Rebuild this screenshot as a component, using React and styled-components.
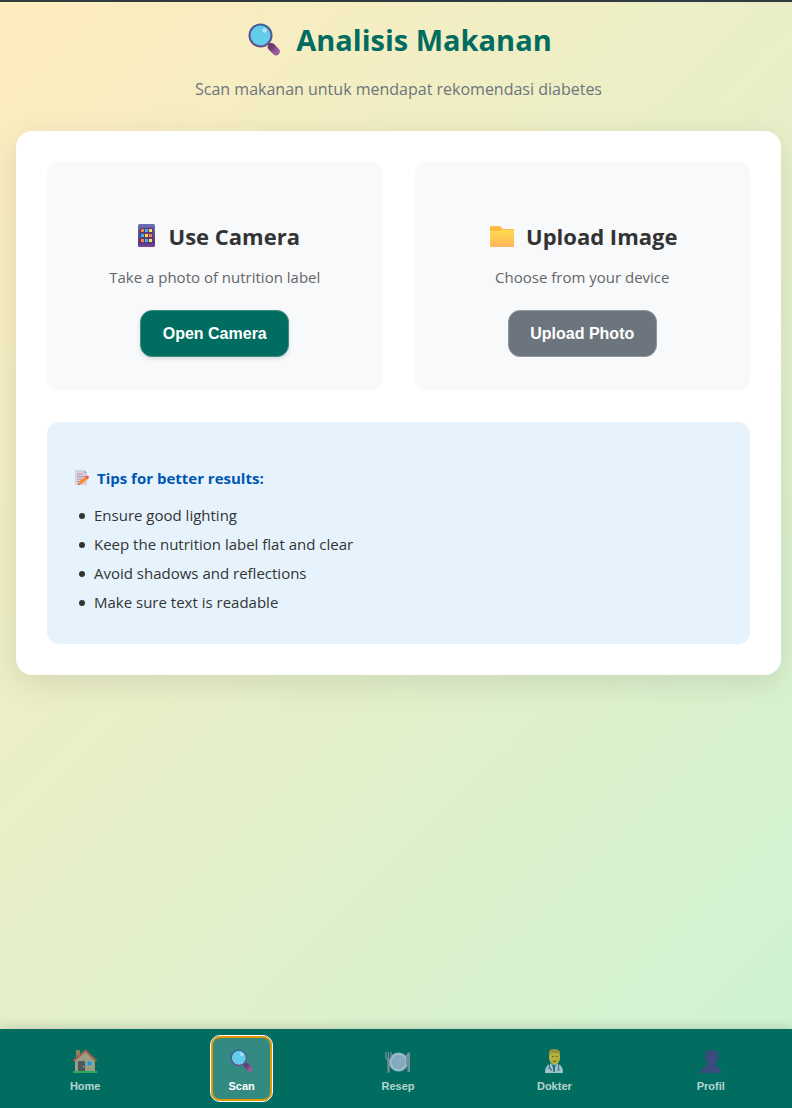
import React from "react";
import styled, { createGlobalStyle, css } from "styled-components";

const GlobalStyle = createGlobalStyle`
  *, *::before, *::after { box-sizing: border-box; }
  body {
    margin: 0;
    color: #333;
    font-family: "Open Sans", "Noto Sans", sans-serif;
    font-size: 15px;
  }
`;

const Page = styled.div`
  display: flex;
  flex-direction: column;
  min-height: 100vh;
  border-top: 2px solid #2f3b41;
  background: linear-gradient(135deg, #ffecbe 0%, #cdf3d4 100%);
`;

const Content = styled.main`
  flex: 1;
  padding: 15px 11px 32px 16px;
`;

const Header = styled.header`
  display: flex;
  flex-direction: column;
  align-items: center;
  gap: 13px;
  margin-bottom: 28px;
  text-align: center;
`;

const Title = styled.h1`
  display: flex;
  align-items: center;
  gap: 11px;
  margin: 0;
  color: #006d60;
  font-size: 29px;
  font-weight: 700;
  line-height: 45px;
`;

const Subtitle = styled.p`
  margin: 0;
  color: #6c757d;
  font-size: 16px;
  line-height: 28px;
`;

const Panel = styled.section`
  display: grid;
  gap: 32px;
  padding: 31px;
  border-radius: 16px;
  background: #fff;
  box-shadow: 0 8px 32px rgba(0, 0, 0, 0.1);
`;

const Options = styled.div`
  display: grid;
  grid-template-columns: repeat(auto-fit, minmax(250px, 1fr));
  gap: 32px;
`;

const OptionCard = styled.article`
  display: flex;
  flex-direction: column;
  align-items: center;
  padding: 58px 24px 33px;
  border-radius: 12px;
  background: #f8f9fb;
`;

const OptionTitle = styled.h2`
  display: flex;
  align-items: center;
  gap: 9px;
  margin: 0 0 13px;
  font-size: 22px;
  font-weight: 700;
  line-height: 32px;
`;

const OptionText = styled.p`
  margin: 0 0 21px;
  color: #666;
  line-height: 24px;
`;

const ActionButton = styled.button`
  min-width: 149px;
  padding: 0 21px;
  border: 1px solid ${(p) => (p.$primary ? "#3d8d83" : "#8e959b")};
  border-radius: 12px;
  background: ${(p) => (p.$primary ? "#006d60" : "#6c757d")};
  box-shadow: ${(p) => (p.$primary ? "0 2px 4px rgba(0, 0, 0, 0.12)" : "none")};
  color: #fff;
  font: 700 16px/45px "Liberation Sans", Arial, sans-serif;
  cursor: pointer;
`;

const Tips = styled.aside`
  padding: 44px 24px 27px;
  border-radius: 12px;
  background: #e6f3fd;
`;

const TipsTitle = styled.h3`
  display: flex;
  align-items: center;
  gap: 6px;
  margin: 0 0 11px;
  color: #0056b3;
  font-size: 15px;
  font-weight: 700;
  line-height: 24px;
`;

const TipsList = styled.ul`
  margin: 0;
  padding-left: 8px;
  line-height: 29px;
  list-style: none;
`;

const Tip = styled.li`
  display: flex;
  align-items: center;
  gap: 9px;

  &::before {
    content: "";
    flex: none;
    width: 6px;
    height: 6px;
    border-radius: 50%;
    background: #333;
  }
`;

const Nav = styled.nav`
  position: sticky;
  bottom: 0;
  display: flex;
  justify-content: space-around;
  align-items: center;
  height: 79px;
  padding: 0 3px 0 7px;
  background: #006d60;
  box-shadow: 0 -2px 10px rgba(0, 0, 0, 0.15);
`;

const NavButton = styled.button`
  display: flex;
  flex-direction: column;
  align-items: center;
  justify-content: center;
  gap: 3px;
  width: 63px;
  height: 67px;
  padding: 4px 0 0;
  border: 1px solid transparent;
  border-radius: 10px;
  background: transparent;
  color: #fff;
  font: 700 11px/16px "Liberation Sans", Arial, sans-serif;
  cursor: pointer;

  > * { opacity: 0.7; }

  ${(p) =>
    p.$active &&
    css`
      border-color: #fff;
      background: #338a80;
      box-shadow: inset 0 0 0 2px #e59700;

      > * { opacity: 1; }
    `}
`;

const Glyph = styled.svg`
  display: block;
  flex: none;
  width: ${(p) => p.$size}px;
  height: ${(p) => p.$size}px;
`;

function Magnifier({ size }) {
  return (
    <Glyph $size={size} viewBox="0 0 40 40" aria-hidden="true">
      <defs>
        <linearGradient id="lens-rim" x1="0" y1="0" x2="0" y2="1">
          <stop offset="0" stopColor="#3f5f9c" />
          <stop offset="1" stopColor="#6b4a8c" />
        </linearGradient>
        <linearGradient id="lens-handle" x1="0" y1="0" x2="1" y2="1">
          <stop offset="0" stopColor="#6a3a72" />
          <stop offset="1" stopColor="#9a5a9e" />
        </linearGradient>
      </defs>
      <path d="M23 23l4 4" stroke="#6a4580" strokeWidth="3" />
      <path d="M26.500 27l4.500 4.500" stroke="url(#lens-handle)" strokeWidth="7.500" strokeLinecap="round" />
      <circle cx="15.500" cy="15.500" r="11" fill="#62cdea" stroke="url(#lens-rim)" strokeWidth="2" />
      <circle cx="19.500" cy="10.500" r="2.200" fill="#b8e4fb" />
    </Glyph>
  );
}

function Phone() {
  const colours = ["#ff8140", "#35b8f5", "#ffe04a", "#35b8f5", "#ffe04a", "#ff8140", "#ff8140", "#35b8f5", "#ffe04a"];
  return (
    <Glyph $size={30} viewBox="0 0 30 30" aria-hidden="true">
      <defs>
        <linearGradient id="phone-body" x1="0" y1="0" x2="0" y2="1">
          <stop offset="0" stopColor="#6d70b8" />
          <stop offset="0.200" stopColor="#5f60aa" />
          <stop offset="0.800" stopColor="#4c3a82" />
          <stop offset="1" stopColor="#7b479b" />
        </linearGradient>
      </defs>
      <rect x="8" y="3" width="17" height="23" rx="1.500" fill="url(#phone-body)" />
      <rect x="10" y="7" width="13" height="15" fill="#5b3a75" />
      {colours.map((fill, i) => (
        <rect key={i} x={11 + (i % 3) * 4} y={8 + Math.floor(i / 3) * 5} width="3" height="3" fill={fill} />
      ))}
    </Glyph>
  );
}

function Folder() {
  return (
    <Glyph $size={30} viewBox="0 0 30 30" aria-hidden="true">
      <defs>
        <linearGradient id="folder-front" x1="0" y1="0" x2="0" y2="1">
          <stop offset="0" stopColor="#ffdc50" />
          <stop offset="1" stopColor="#ffb35c" />
        </linearGradient>
      </defs>
      <path d="M3 6q0-1 1-1h8q1 0 2 1l2 2h10q1 0 1 1v6H3z" fill="#fdbc3f" />
      <path d="M3 11q0-1 1-1h9l2-1h11q1 0 1 1v15q0 1-1 1H4q-1 0-1-1z" fill="url(#folder-front)" />
    </Glyph>
  );
}

function Memo() {
  return (
    <Glyph $size={20} viewBox="0 0 20 20" aria-hidden="true">
      <path d="M4 2h9l3 3v12H4z" fill="#d8cfdf" />
      <path d="M13 2v3h3z" fill="#aaa0b8" />
      <path d="M6 6h6M6 8.500h8M6 11h6M6 13.500h2" stroke="#a69db2" strokeWidth="1" />
      <path d="M7 17l1.200-3.500 6-5 2.300 2.500-6 5z" fill="#ff8a34" />
      <path d="M14 8.700l1-.8q1.500-.8 2.500.4.900 1.300-.1 2.300l-1 .7z" fill="#f4524e" />
      <path d="M7 17l.5-1.500 1.200 1.200z" fill="#6b414c" />
    </Glyph>
  );
}

function House() {
  return (
    <Glyph $size={28} viewBox="0 0 28 28" aria-hidden="true">
      <path d="M5 3h4v10H5z" fill="#c48b66" />
      <path d="M4 13L14.500 4 24 14v11H4z" fill="#e0b190" />
      <path d="M2.500 14L14.500 3.500 25.500 14" fill="none" stroke="#e75843" strokeWidth="2" />
      <path d="M7 14h7v10H7z" fill="#6b5362" />
      <circle cx="12.500" cy="19.500" r=".7" fill="#ddd" />
      <path d="M16 14h5v5h-5z" fill="#2aaeff" stroke="#e8dacb" strokeWidth=".6" />
      <path d="M2 24h24v2H2z" fill="#39c65b" />
    </Glyph>
  );
}

function Plate() {
  return (
    <Glyph $size={28} viewBox="0 0 28 28" aria-hidden="true">
      <circle cx="14.500" cy="15" r="9.500" fill="#d6daf3" />
      <circle cx="14.500" cy="15" r="6.200" fill="#bcc5e6" stroke="#a9b2dc" strokeWidth=".7" />
      <path d="M2 5v5q0 2 2 2v13h1V12q2 0 2-2V5M4.500 5v6" fill="none" stroke="#a5a0b6" strokeWidth="1.300" />
      <path d="M26 5v20h-2.500v-7H22V10q0-4 4-5z" fill="#a5a0b6" />
    </Glyph>
  );
}

function Doctor() {
  return (
    <Glyph $size={28} viewBox="0 0 28 28" aria-hidden="true">
      <path d="M5 26q0-10 9-10t9 10z" fill="#e4ebf8" />
      <path d="M11 16h6l-3 8z" fill="#53a5d8" />
      <path d="M14 18v7" stroke="#355987" strokeWidth="1.500" />
      <path d="M9.500 17v4M18.500 17v5M8 22q1.500-2 3 0v2M17 23h3" fill="none" stroke="#566f91" strokeWidth="1.200" />
      <path d="M9 6q0-3 3-3h5q3 0 3 4v5q-1 5-5.500 6Q9 16 9 11z" fill="#ffcf30" />
      <path d="M9 9V6q0-4 5-4 6 0 6 5v2l-1.500-3h-7z" fill="#dba52d" />
      <path d="M12 9.500h1.500M16 9.500h1.500M13 14q1.500 1 3 0" stroke="#80592f" strokeWidth="1" />
    </Glyph>
  );
}

function Person() {
  return (
    <Glyph $size={28} viewBox="0 0 28 28" aria-hidden="true">
      <defs>
        <linearGradient id="person-fill" x1="0" y1="0" x2="1" y2="1">
          <stop offset="0" stopColor="#4b3a78" />
          <stop offset="1" stopColor="#5c429a" />
        </linearGradient>
      </defs>
      <path d="M3 26q2-8 11-9 9 1 11 9z" fill="url(#person-fill)" />
      <path d="M8.500 6q0-3 4-3h4q4 0 4 4v2q1.500 0 .5 3-.5 1-1 1-.5 3-2 4.500-3.500 2-7 0Q9.500 16 9 13q-1 0-1.500-2-.3-2 1-2z" fill="url(#person-fill)" />
    </Glyph>
  );
}

const tips = [
  "Ensure good lighting",
  "Keep the nutrition label flat and clear",
  "Avoid shadows and reflections",
  "Make sure text is readable",
];

const navItems = [
  { label: "Home", icon: <House /> },
  { label: "Scan", icon: <Magnifier size={28} />, active: true },
  { label: "Resep", icon: <Plate /> },
  { label: "Dokter", icon: <Doctor /> },
  { label: "Profil", icon: <Person /> },
];

export default function App() {
  return (
    <Page>
      <GlobalStyle />
      <Content>
        <Header>
          <Title>
            <Magnifier size={40} />
            Analisis Makanan
          </Title>
          <Subtitle>Scan makanan untuk mendapat rekomendasi diabetes</Subtitle>
        </Header>
        <Panel>
          <Options>
            <OptionCard>
              <OptionTitle>
                <Phone />
                Use Camera
              </OptionTitle>
              <OptionText>Take a photo of nutrition label</OptionText>
              <ActionButton type="button" $primary>Open Camera</ActionButton>
            </OptionCard>
            <OptionCard>
              <OptionTitle>
                <Folder />
                Upload Image
              </OptionTitle>
              <OptionText>Choose from your device</OptionText>
              <ActionButton type="button">Upload Photo</ActionButton>
            </OptionCard>
          </Options>
          <Tips>
            <TipsTitle>
              <Memo />
              Tips for better results:
            </TipsTitle>
            <TipsList>
              {tips.map((tip) => (
                <Tip key={tip}>{tip}</Tip>
              ))}
            </TipsList>
          </Tips>
        </Panel>
      </Content>
      <Nav aria-label="Main">
        {navItems.map(({ label, icon, active }) => (
          <NavButton key={label} type="button" $active={active} aria-current={active ? "page" : undefined}>
            {icon}
            <span>{label}</span>
          </NavButton>
        ))}
      </Nav>
    </Page>
  );
}
